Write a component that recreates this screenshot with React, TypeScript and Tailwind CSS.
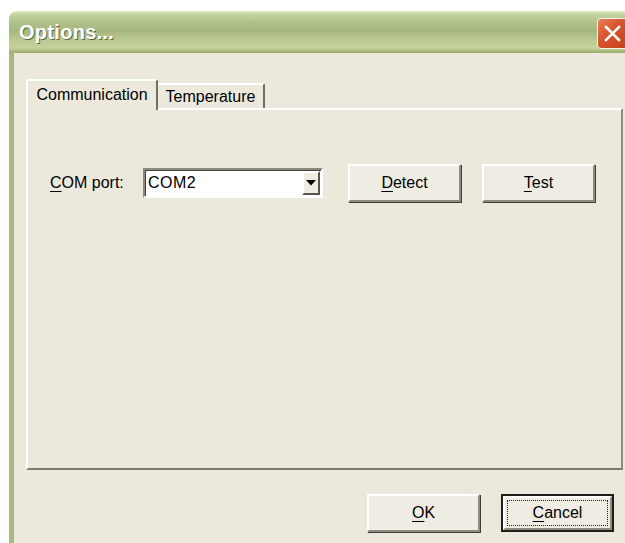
import React from 'react';

const raised =
  'border-2 border-t-white border-l-white border-r-[#8e8b80] border-b-[#8e8b80] shadow-[1px_1px_0_#3f3f3a]';

function Mnemonic({ label, index = 0 }: { label: string; index?: number }) {
  return (
    <span>
      {label.slice(0, index)}
      <u className="underline-offset-[3px]">{label[index]}</u>
      {label.slice(index + 1)}
    </span>
  );
}

function PushButton({ label, focused }: { label: string; focused?: boolean }) {
  if (focused) {
    return (
      <div className="h-[38px] w-[113px] border-2 border-[#1e1e1c]">
        <div className={`flex h-full w-full items-center justify-center bg-[#efece3] ${raised} shadow-none`}>
          <div className="flex h-[26px] w-[101px] items-center justify-center border border-dotted border-[#222]">
            <Mnemonic label={label} />
          </div>
        </div>
      </div>
    );
  }
  return (
    <div className={`flex h-[38px] w-[113px] items-center justify-center bg-[#efece3] ${raised}`}>
      <Mnemonic label={label} />
    </div>
  );
}

function TitleBar() {
  return (
    <div className="flex h-[42px] items-center justify-between bg-[linear-gradient(to_bottom,#e4ebc7_0%,#c6d3a0_8%,#aebf89_30%,#a7b780_48%,#bccb93_70%,#c6d29b_88%,#97aa6b_100%)] pl-[10px] pr-[8px]">
      <span className="font-['Liberation_Sans',Arial,sans-serif] text-[20px] font-bold tracking-[0.3px] text-white [text-shadow:1px_1px_0_#59693a]">
        Options...
      </span>
      <div className="mt-[2px] flex h-[31px] w-[31px] items-center justify-center rounded-[4px] border-[1.5px] border-[#f4f1e6] bg-[linear-gradient(135deg,#ea7d55_0%,#d6532c_45%,#c2401b_100%)]">
        <svg width="19" height="19" viewBox="0 0 19 19">
          <path d="M3 3 L16 16 M16 3 L3 16" stroke="#fff" strokeWidth="2.6" strokeLinecap="square" />
        </svg>
      </div>
    </div>
  );
}

function ComboBox() {
  return (
    <div className="flex h-[30px] w-[180px] border-2 border-t-[#8c897e] border-l-[#8c897e] border-b-white border-r-white bg-white shadow-[inset_1px_1px_0_#44433e]">
      <span className="flex flex-1 items-center pl-[3px] tracking-[0.5px]">COM2</span>
      <div className="my-[1px] mr-[1px] flex w-[18px] items-center justify-center border-2 border-t-white border-l-white border-r-[#55544e] border-b-[#55544e] bg-[#efece3]">
        <svg width="10" height="6" viewBox="0 0 10 6">
          <path d="M0 0 H10 L5 5.5 Z" fill="#000" />
        </svg>
      </div>
    </div>
  );
}

export default function App() {
  return (
    <div className="h-[543px] w-[625px] overflow-hidden bg-white pl-[9px] pt-[11px] font-['Liberation_Sans',Arial,sans-serif] text-[16px] text-black">
      <div className="flex w-[627px] flex-col overflow-hidden rounded-t-[8px]">
        <TitleBar />
        <div className="flex h-[490px] flex-col border-l-[5px] border-[#a6b97e] bg-[#ece9dc] pl-[12px] pt-[26px]">
          {/* tab strip */}
          <div className="relative z-10 -mb-[2px] flex h-[31px] items-end">
            <div className="flex h-[31px] w-[132px] items-center justify-center rounded-t-[2px] border-l-2 border-r-2 border-t-2 border-l-white border-t-white border-r-[#6f6d66] bg-[#ece9dc] pb-[2px]">
              Communication
            </div>
            <div className="mb-[2px] flex h-[25px] w-[107px] items-center justify-center rounded-t-[2px] border-r-2 border-t-2 border-t-white border-r-[#6f6d66] pt-[1px]">
              Temperature
            </div>
          </div>

          {/* tab page */}
          <div className="h-[362px] w-[597px] border-2 border-l-white border-t-white border-r-[#8e8b80] border-b-[#7c7a72] pl-[22px] pt-[54px]">
            <div className="flex h-[38px] items-center">
              <span className="w-[93px]">
                <Mnemonic label="COM port:" />
              </span>
              <ComboBox />
              <div className="ml-[25px] flex gap-[20px]">
                <div className="h-[38px] w-[114px]">
                  <PushButton label="Detect" />
                </div>
                <div className="h-[38px] w-[114px]">
                  <PushButton label="Test" />
                </div>
              </div>
            </div>
          </div>

          {/* dialog buttons */}
          <div className="mt-[24px] flex w-[597px] justify-end gap-[21px] pr-[9px]">
            <PushButton label="OK" />
            <PushButton label="Cancel" focused />
          </div>
        </div>
      </div>
    </div>
  );
}
